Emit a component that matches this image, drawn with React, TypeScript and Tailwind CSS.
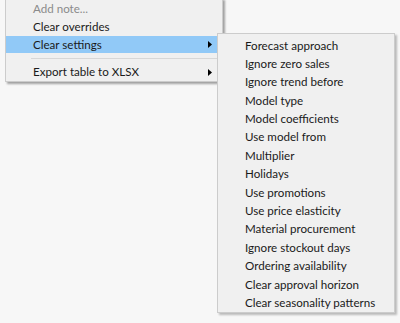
import React from "react";

const subItems = [
  "Forecast approach",
  "Ignore zero sales",
  "Ignore trend before",
  "Model type",
  "Model coefficients",
  "Use model from",
  "Multiplier",
  "Holidays",
  "Use promotions",
  "Use price elasticity",
  "Material procurement",
  "Ignore stockout days",
  "Ordering availability",
  "Clear approval horizon",
  "Clear seasonality patterns",
];

const Arrow: React.FC = () => (
  <svg width="4" height="7" viewBox="0 0 4 7" className="block">
    <path d="M0 0 L4 3.5 L0 7 Z" fill="#000" />
  </svg>
);

const App: React.FC = () => {
  return (
    <div
      className="relative w-[400px] h-[323px] overflow-hidden bg-[#f7f7f7] text-[11.6px] text-[#1a1a1a]"
      style={{ fontFamily: '"Segoe UI", Lato, sans-serif' }}
    >
      {/* main context menu */}
      <div className="absolute left-[5px] top-[-2px] w-[218px] bg-[#f0f0f0] border border-[#cccccc] shadow-[2px_2px_2px_rgba(0,0,0,0.35)]">
        <div className="h-[19px] pl-[27px] pt-[1px] flex items-center text-[#8b8b8b]">Add note...</div>
        <div className="h-[18px] pl-[27px] flex items-center">Clear overrides</div>
        <div className="h-[17px] pl-[27px] pr-[10px] flex items-center justify-between bg-[#91c9f7]">
          <span>Clear settings</span>
          <Arrow />
        </div>
        <div className="h-[10px] flex items-center pl-[25px] pr-[2px]">
          <div className="h-px w-full bg-[#d7d7d7]" />
        </div>
        <div className="h-[18px] pl-[27px] pr-[10px] flex items-center justify-between">
          <span>Export table to XLSX</span>
          <Arrow />
        </div>
      </div>

      {/* submenu */}
      <div className="absolute left-[217px] top-[33px] w-[178px] bg-[#f0f0f0] border border-[#cccccc] pt-[2px] shadow-[2px_2px_2px_rgba(0,0,0,0.25)]">
        {subItems.map((label) => (
          <div key={label} className="h-[18.4px] pl-[27px] flex items-center whitespace-nowrap">
            {label}
          </div>
        ))}
      </div>
    </div>
  );
};

export default App;
